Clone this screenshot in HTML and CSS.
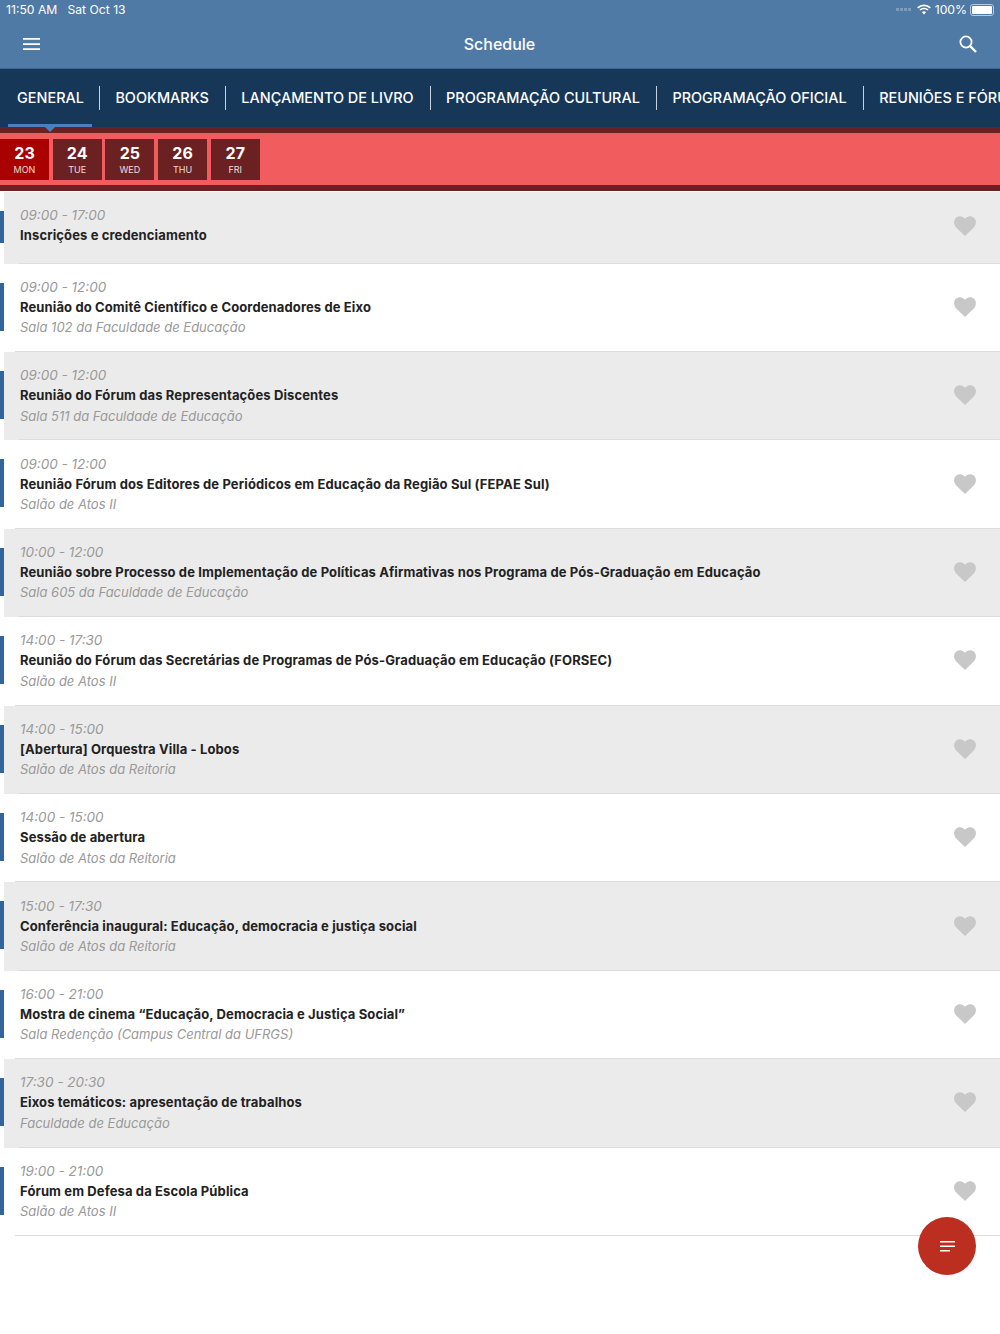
FILE: index.html
```html
<!DOCTYPE html>
<html lang="en">
<head>
    <meta charset="UTF-8">
    <meta name="viewport" content="width=device-width, initial-scale=1.0">
    <link rel="stylesheet" href="styles.css">
    <title>Schedule</title>
</head>
<body>
    <svg class="defs" width="0" height="0">
        <symbol id="heart" viewBox="0 0 24 22">
            <path d="M12 22 2.600 12.800C-.8 9.400-.7 4.700 1.800 2.200 4.500-.5 9.200-.6 12 3.100c2.800-3.700 7.500-3.600 10.200-.9 2.500 2.500 2.600 7.200-.8 10.600z"/>
        </symbol>
    </svg>

    <header class="topBar">
        <div class="statusBar">
            <div class="statusLeft">
                <span>11:50 AM</span>
                <span>Sat Oct 13</span>
            </div>
            <div class="statusRight">
                <div class="signal"><i></i><i></i><i></i><i></i></div>
                <svg class="wifi" width="14" height="11" viewBox="0 0 16 12">
                    <path fill="#fff" d="M8 11.600 5.700 9.100a3.300 3.300 0 0 1 4.600 0zM3.900 7.200 2.700 6a7.700 7.700 0 0 1 10.600 0l-1.200 1.200a6 6 0 0 0-8.200 0zM1.500 4.800.2 3.500a11.300 11.300 0 0 1 15.600 0l-1.300 1.300a9.400 9.400 0 0 0-13 0z"/>
                </svg>
                <span>100%</span>
                <div class="battery"><div class="batteryFill"></div></div>
            </div>
        </div>
        <div class="navBar">
            <svg width="17" height="12" viewBox="0 0 17 12">
                <path fill="#fff" d="M0 0h17v1.700H0zM0 5.200h17v1.700H0zM0 10.300h17V12H0z"/>
            </svg>
            <div class="navTitle">Schedule</div>
            <svg width="18" height="18" viewBox="0 0 18 18">
                <circle cx="7" cy="7" r="5.600" fill="none" stroke="#fff" stroke-width="1.800"/>
                <path d="M11 11l6 6" stroke="#fff" stroke-width="2.400"/>
            </svg>
        </div>
    </header>

    <nav class="tabs">
        <div class="tab active">GENERAL</div>
        <div class="tab">BOOKMARKS</div>
        <div class="tab">LANÇAMENTO DE LIVRO</div>
        <div class="tab">PROGRAMAÇÃO CULTURAL</div>
        <div class="tab">PROGRAMAÇÃO OFICIAL</div>
        <div class="tab">REUNIÕES E FÓRUNS</div>
    </nav>

    <div class="days">
        <div class="day selected"><b>23</b><span>MON</span></div>
        <div class="day"><b>24</b><span>TUE</span></div>
        <div class="day"><b>25</b><span>WED</span></div>
        <div class="day"><b>26</b><span>THU</span></div>
        <div class="day"><b>27</b><span>FRI</span></div>
    </div>

    <main class="list">
        <div class="row odd first">
            <div class="bar"></div>
            <div class="info">
                <div class="time">09:00 - 17:00</div>
                <div class="title">Inscrições e credenciamento</div>
            </div>
            <svg class="heart"><use href="#heart"/></svg>
        </div>
        <div class="row">
            <div class="bar"></div>
            <div class="info">
                <div class="time">09:00 - 12:00</div>
                <div class="title">Reunião do Comitê Científico e Coordenadores de Eixo</div>
                <div class="place">Sala 102 da Faculdade de Educação</div>
            </div>
            <svg class="heart"><use href="#heart"/></svg>
        </div>
        <div class="row odd">
            <div class="bar"></div>
            <div class="info">
                <div class="time">09:00 - 12:00</div>
                <div class="title">Reunião do Fórum das Representações Discentes</div>
                <div class="place">Sala 511 da Faculdade de Educação</div>
            </div>
            <svg class="heart"><use href="#heart"/></svg>
        </div>
        <div class="row">
            <div class="bar"></div>
            <div class="info">
                <div class="time">09:00 - 12:00</div>
                <div class="title">Reunião Fórum dos Editores de Periódicos em Educação da Região Sul (FEPAE Sul)</div>
                <div class="place">Salão de Atos II</div>
            </div>
            <svg class="heart"><use href="#heart"/></svg>
        </div>
        <div class="row odd">
            <div class="bar"></div>
            <div class="info">
                <div class="time">10:00 - 12:00</div>
                <div class="title">Reunião sobre Processo de Implementação de Políticas Afirmativas nos Programa de Pós-Graduação em Educação</div>
                <div class="place">Sala 605 da Faculdade de Educação</div>
            </div>
            <svg class="heart"><use href="#heart"/></svg>
        </div>
        <div class="row">
            <div class="bar"></div>
            <div class="info">
                <div class="time">14:00 - 17:30</div>
                <div class="title">Reunião do Fórum das Secretárias de Programas de Pós-Graduação em Educação (FORSEC)</div>
                <div class="place">Salão de Atos II</div>
            </div>
            <svg class="heart"><use href="#heart"/></svg>
        </div>
        <div class="row odd">
            <div class="bar"></div>
            <div class="info">
                <div class="time">14:00 - 15:00</div>
                <div class="title">[Abertura] Orquestra Villa - Lobos</div>
                <div class="place">Salão de Atos da Reitoria</div>
            </div>
            <svg class="heart"><use href="#heart"/></svg>
        </div>
        <div class="row">
            <div class="bar"></div>
            <div class="info">
                <div class="time">14:00 - 15:00</div>
                <div class="title">Sessão de abertura</div>
                <div class="place">Salão de Atos da Reitoria</div>
            </div>
            <svg class="heart"><use href="#heart"/></svg>
        </div>
        <div class="row odd">
            <div class="bar"></div>
            <div class="info">
                <div class="time">15:00 - 17:30</div>
                <div class="title">Conferência inaugural: Educação, democracia e justiça social</div>
                <div class="place">Salão de Atos da Reitoria</div>
            </div>
            <svg class="heart"><use href="#heart"/></svg>
        </div>
        <div class="row">
            <div class="bar"></div>
            <div class="info">
                <div class="time">16:00 - 21:00</div>
                <div class="title">Mostra de cinema “Educação, Democracia e Justiça Social”</div>
                <div class="place">Sala Redenção (Campus Central da UFRGS)</div>
            </div>
            <svg class="heart"><use href="#heart"/></svg>
        </div>
        <div class="row odd">
            <div class="bar"></div>
            <div class="info">
                <div class="time">17:30 - 20:30</div>
                <div class="title">Eixos temáticos: apresentação de trabalhos</div>
                <div class="place">Faculdade de Educação</div>
            </div>
            <svg class="heart"><use href="#heart"/></svg>
        </div>
        <div class="row">
            <div class="bar"></div>
            <div class="info">
                <div class="time">19:00 - 21:00</div>
                <div class="title">Fórum em Defesa da Escola Pública</div>
                <div class="place">Salão de Atos II</div>
            </div>
            <svg class="heart"><use href="#heart"/></svg>
        </div>
    </main>

    <div class="fab">
        <svg width="15" height="11" viewBox="0 0 15 11">
            <path fill="#fff" d="M0 0h15v1.500H0zM0 4.500h15V6H0zM0 9h10v1.500H0z"/>
        </svg>
    </div>
</body>
</html>
```

FILE: styles.css
```css
body{
    margin: 0;
    height: 1334px;
    overflow: hidden;
    position: relative;
    background-color: white;
    font-family: Inter, "Open Sans", sans-serif;
}

.defs{
    position: absolute;
}

.topBar{
    height: 68px;
    background-color: #507aa6;
    border-bottom: 1px solid #3f6690;
    color: white;
}

.statusBar{
    height: 19px;
    padding: 0 6px;
    display: flex;
    justify-content: space-between;
    align-items: center;
    font-size: 12.2px;
}

.statusLeft{
    display: flex;
    gap: 10px;
}

.statusRight{
    display: flex;
    align-items: center;
    gap: 4px;
}

.signal{
    display: flex;
    gap: 1px;
    margin-right: 2px;
}

.signal i{
    width: 3px;
    height: 3px;
    background-color: #7d9bbc;
}

.battery{
    width: 20px;
    height: 8px;
    padding: 1px;
    margin-left: -1px;
    border: 1px solid #b9c9da;
    border-radius: 3px;
}

.batteryFill{
    height: 100%;
    background-color: white;
    border-radius: 1px;
}

.navBar{
    height: 49px;
    padding: 0 23px;
    display: flex;
    justify-content: space-between;
    align-items: center;
}

.navTitle{
    font-size: 16px;
    font-weight: 500;
}

.tabs{
    height: 58px;
    background-color: #173759;
    display: flex;
    align-items: center;
    position: relative;
    color: white;
    font-size: 14.450px;
    font-weight: 500;
    white-space: nowrap;
}

.tab{
    height: 24px;
    line-height: 24px;
    padding: 0 16px 0 15.500px;
    flex-shrink: 0;
    border-left: 1px solid #c9d2dc;
}

.tab.active{
    padding: 0 15px 0 17px;
    border-left: none;
}

.tab.active::before{
    content: "";
    position: absolute;
    left: 8px;
    bottom: 0;
    width: 84px;
    height: 3px;
    background-color: #4a80bb;
}

.tab.active::after{
    content: "";
    position: absolute;
    left: 45px;
    bottom: -5px;
    z-index: 2;
    border-left: 5px solid transparent;
    border-right: 5px solid transparent;
    border-top: 5px solid #4a80bb;
}

.days{
    height: 52px;
    background-color: #f15d5f;
    border-top: 6px solid #6b2122;
    border-bottom: 6px solid #6b2122;
    display: flex;
    gap: 3.700px;
    align-items: center;
}

.day{
    width: 49px;
    height: 41px;
    box-sizing: border-box;
    padding-top: 2px;
    background-color: #6b2122;
    color: white;
    display: flex;
    flex-direction: column;
    align-items: center;
    justify-content: center;
}

.day.selected{
    background-color: #a90000;
}

.day b{
    font-size: 16px;
    font-weight: 700;
    line-height: 20px;
}

.day span{
    font-size: 9px;
    line-height: 14px;
    opacity: 0.85;
}

.list{
    margin-top: 1px;
    height: 1043px;
}

.row{
    height: 88.400px;
    box-sizing: border-box;
    display: flex;
    align-items: center;
    justify-content: space-between;
    position: relative;
    padding: 0 24px 1.500px 20px;
}

.row.first{
    height: 71.600px;
    padding-bottom: 5px;
}

.row::after{
    content: "";
    position: absolute;
    left: 15px;
    right: 0;
    bottom: 0;
    height: 1px;
    background-color: #dcdcdc;
}

.row.odd{
    margin-left: 4px;
    padding-left: 16px;
    background-color: #ebebeb;
}

.bar{
    position: absolute;
    left: 0;
    top: 19px;
    width: 4px;
    height: 48px;
    background-color: #31659c;
}

.row.odd .bar{
    left: -4px;
}

.row.first .bar{
    height: 32px;
}

.time, .place{
    line-height: 20px;
    font-style: italic;
    color: #999;
}

.time{
    font-size: 13.500px;
}

.place{
    font-size: 13px;
}

.title{
    font-size: 13px;
    letter-spacing: 0.120px;
    line-height: 20.500px;
    font-weight: 700;
    color: #222;
}

.heart{
    width: 22px;
    height: 20px;
    margin-bottom: 0.500px;
    fill: #c8c8c8;
}

.row.first .heart{
    margin-top: 2px;
    margin-bottom: 0;
}

.fab{
    position: absolute;
    left: 918px;
    top: 1217px;
    width: 58px;
    height: 58px;
    border-radius: 50%;
    background-color: #bc2f20;
    display: flex;
    align-items: center;
    justify-content: center;
}
```
